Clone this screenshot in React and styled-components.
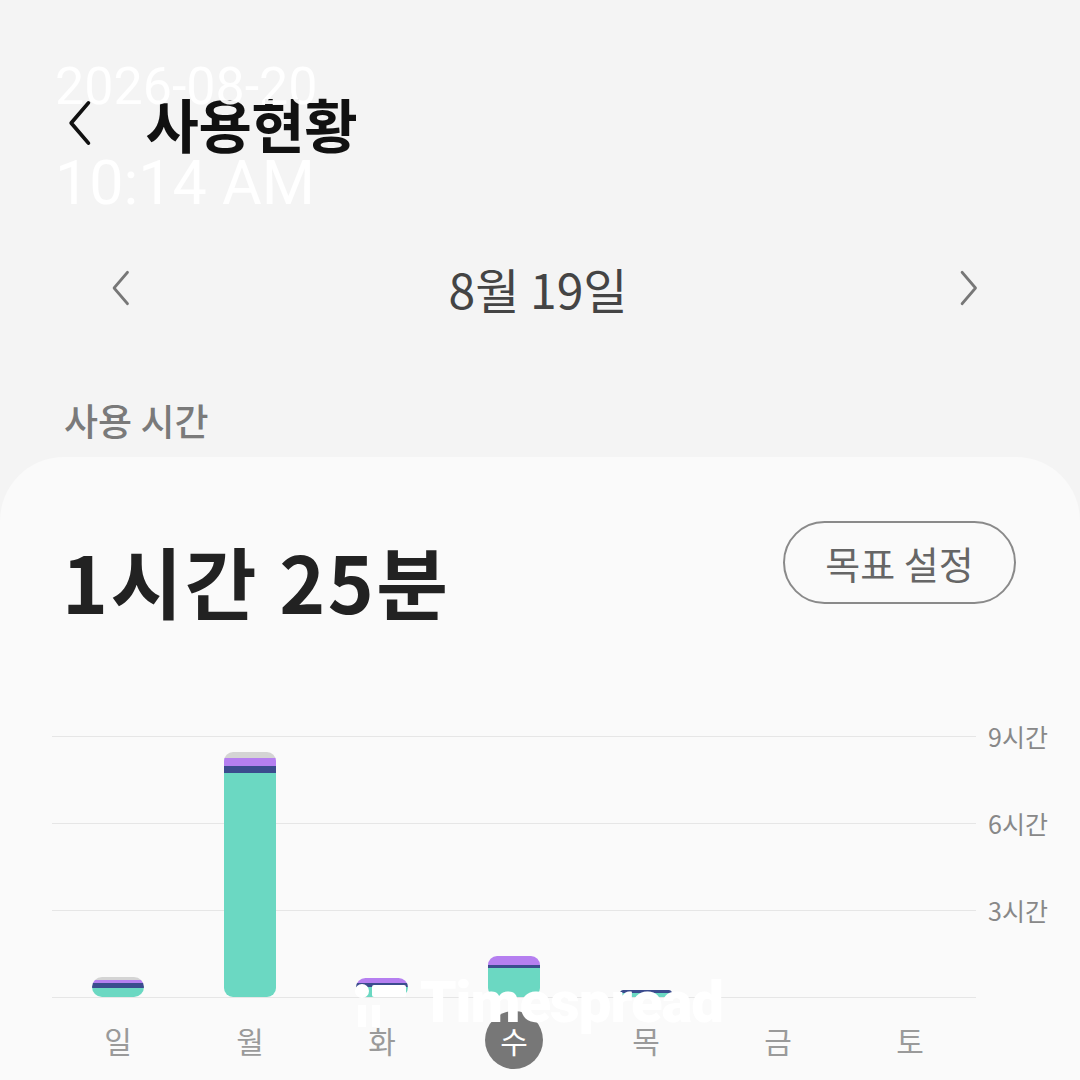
import React from "react";
import styled, { createGlobalStyle } from "styled-components";

const GlobalStyle = createGlobalStyle`
  html, body {
    margin: 0;
    padding: 0;
    background: #f4f4f4;
    font-family: "Noto Sans CJK KR", "Noto Sans", sans-serif;
  }
  #root { width: 1080px; height: 1080px; overflow: hidden; }
`;

const Page = styled.div`
  position: relative;
  width: 1080px;
  height: 1080px;
  overflow: hidden;
  background: #f4f4f4;
`;

const Header = styled.header`
  display: flex;
  align-items: center;
  gap: 52px;
  height: 66px;
  padding: 90px 0 0 66px;
`;

const Title = styled.h1`
  margin: 0;
  font-size: 58px;
  font-weight: 700;
  color: #111;
  line-height: 66px;
  letter-spacing: -0.5px;
`;

const DateNav = styled.div`
  display: flex;
  align-items: center;
  justify-content: space-between;
  height: 64px;
  margin-top: 100px;
  padding: 0 100px 0 110px;
`;

const DateText = styled.div`
  font-size: 48px;
  color: #444;
  line-height: 64px;
  padding-right: 14px;
`;

const SectionLabel = styled.div`
  margin-top: 80px;
  padding-left: 64px;
  font-size: 37px;
  font-weight: 500;
  color: #7a7a7a;
  line-height: 40px;
`;

const Card = styled.section`
  position: relative;
  margin-top: 17px;
  height: 700px;
  background: #fafafa;
  border-radius: 64px 64px 0 0;
  padding-top: 64px;
  box-sizing: border-box;
`;

const CardHead = styled.div`
  display: flex;
  justify-content: space-between;
  align-items: flex-start;
  padding: 0 64px 0 62px;
`;

const Total = styled.div`
  margin-top: 14px;
  font-size: 78px;
  font-weight: 700;
  color: #222;
  line-height: 90px;
  letter-spacing: 2.5px;
`;

const GoalButton = styled.button`
  width: 233px;
  height: 83px;
  border: 2px solid #8a8a8a;
  border-radius: 42px;
  background: transparent;
  font-family: inherit;
  font-size: 38px;
  color: #666;
  cursor: pointer;
`;

const ChartWrap = styled.div`
  display: flex;
  margin-top: 111px;
  padding-left: 52px;
`;

const Plot = styled.div`
  display: flex;
  width: 924px;
  height: 262px;
  background:
    linear-gradient(#e6e6e6, #e6e6e6) 0 0 / 100% 1px no-repeat,
    linear-gradient(#e6e6e6, #e6e6e6) 0 87px / 100% 1px no-repeat,
    linear-gradient(#e6e6e6, #e6e6e6) 0 174px / 100% 1px no-repeat,
    linear-gradient(#e6e6e6, #e6e6e6) 0 261px / 100% 1px no-repeat;
`;

const Column = styled.div`
  flex: 0 0 132px;
  display: flex;
  align-items: flex-end;
  justify-content: center;
  padding-bottom: 1px;
  box-sizing: border-box;
`;

const Bar = styled.div`
  width: 52px;
  display: flex;
  flex-direction: column;
  overflow: hidden;
  border-radius: ${(p) => (p.$pill ? "10px" : "9px")};
`;

const Segment = styled.div`
  flex: 0 0 auto;
  background: ${(p) => p.$color};
`;

const Axis = styled.div`
  display: flex;
  flex-direction: column;
  padding-left: 12px;
`;

const AxisLabel = styled.div`
  height: 87px;
  font-size: 25px;
  color: #888;
  line-height: 24px;
  transform: translateY(-12px);
`;

const DayRow = styled.div`
  display: flex;
  margin-top: 13px;
  padding-left: 52px;
`;

const Day = styled.div`
  flex: 0 0 132px;
  display: flex;
  justify-content: center;
`;

const DayLabel = styled.span`
  width: 58px;
  height: 58px;
  border-radius: 50%;
  display: flex;
  align-items: center;
  justify-content: center;
  font-size: 30px;
  line-height: 30px;
  color: ${(p) => (p.$active ? "#fff" : "#9a9a9a")};
  background: ${(p) => (p.$active ? "#777" : "transparent")};
`;

const Stamp = styled.div`
  position: absolute;
  left: 55px;
  top: 57px;
  font-family: Roboto, "Liberation Sans", sans-serif;
  color: rgba(255, 255, 255, 0.95);
  pointer-events: none;
`;

const StampDate = styled.div`
  font-size: 52px;
  line-height: 60px;
`;

const StampTime = styled.div`
  margin-top: 30px;
  font-size: 61px;
  line-height: 72px;
`;

const Brand = styled.div`
  position: absolute;
  left: 354px;
  top: 968px;
  display: flex;
  align-items: center;
  gap: 8px;
  font-family: Roboto, "Liberation Sans", sans-serif;
  font-size: 58px;
  font-weight: 900;
  color: #fff;
  letter-spacing: -1px;
  pointer-events: none;
`;

const Chevron = ({ dir = "left", size = 32, color = "#111", stroke = 3 }) => (
  <svg width={size * 0.6} height={size} viewBox="0 0 18 32" fill="none">
    <path
      d={dir === "left" ? "M15 2 L3 16 L15 30" : "M3 2 L15 16 L3 30"}
      stroke={color}
      strokeWidth={stroke}
      strokeLinecap="round"
      strokeLinejoin="round"
    />
  </svg>
);

const C = {
  gray: "#d4d4d4",
  purple: "#b57ff0",
  navy: "#3b4c8e",
  teal: "#6bd8c2",
};

const days = [
  { d: "일", segs: [[C.gray, 3], [C.purple, 3], [C.navy, 5], [C.teal, 9]], pill: true },
  { d: "월", segs: [[C.gray, 6], [C.purple, 8], [C.navy, 7], [C.teal, 224]] },
  { d: "화", segs: [[C.purple, 5], [C.navy, 4], [C.teal, 10]], pill: true },
  { d: "수", segs: [[C.purple, 9], [C.navy, 3], [C.teal, 29]], active: true },
  { d: "목", segs: [[C.navy, 3], [C.teal, 4]] },
  { d: "금", segs: [] },
  { d: "토", segs: [] },
];

export default function App() {
  return (
    <Page>
      <GlobalStyle />
      <Header>
        <Chevron dir="left" size={46} color="#111" stroke={2.6} />
        <Title>사용현황</Title>
      </Header>
      <DateNav>
        <Chevron dir="left" size={36} color="#777" stroke={2.4} />
        <DateText>8월 19일</DateText>
        <Chevron dir="right" size={36} color="#777" stroke={2.4} />
      </DateNav>
      <SectionLabel>사용 시간</SectionLabel>
      <Card>
        <CardHead>
          <Total>1시간 25분</Total>
          <GoalButton>목표 설정</GoalButton>
        </CardHead>
        <ChartWrap>
          <Plot>
            {days.map((day) => {
              const h = day.segs.reduce((s, x) => s + x[1], 0);
              return (
                <Column key={day.d}>
                  {h > 0 && (
                    <Bar $pill={day.pill} style={{ height: h }}>
                      {day.segs.map(([color, sh], i) => (
                        <Segment key={i} $color={color} style={{ height: sh }} />
                      ))}
                    </Bar>
                  )}
                </Column>
              );
            })}
          </Plot>
          <Axis>
            <AxisLabel>9시간</AxisLabel>
            <AxisLabel>6시간</AxisLabel>
            <AxisLabel>3시간</AxisLabel>
          </Axis>
        </ChartWrap>
        <DayRow>
          {days.map((day) => (
            <Day key={day.d}>
              <DayLabel $active={day.active}>{day.d}</DayLabel>
            </Day>
          ))}
        </DayRow>
      </Card>
      <Stamp>
        <StampDate>2026-08-20</StampDate>
        <StampTime>10:14 AM</StampTime>
      </Stamp>
      <Brand>
        <svg width="58" height="50" viewBox="0 0 58 50">
          <circle cx="8" cy="14" r="7" fill="#fff" />
          <rect x="18" y="8" width="34" height="12" rx="2" fill="#fff" />
          <rect x="4" y="28" width="8" height="22" fill="#fff" />
          <rect x="18" y="28" width="8" height="22" fill="#fff" />
        </svg>
        Timespread
      </Brand>
    </Page>
  );
}
